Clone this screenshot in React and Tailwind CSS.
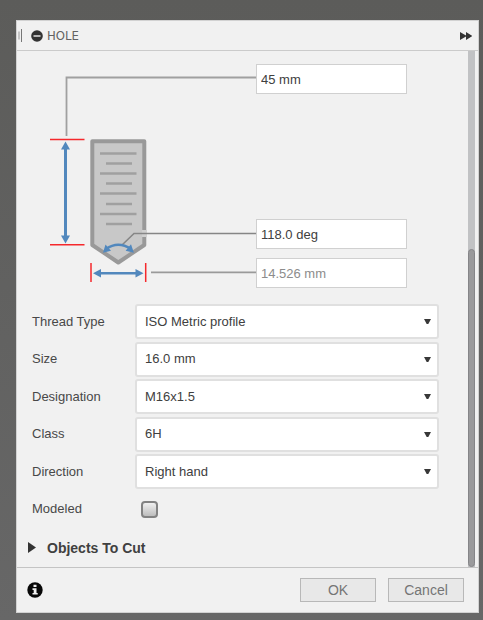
import React from 'react';

const inputClass =
  "h-[30px] w-[151px] border border-[#d0d0d0] bg-white px-1 text-[13px] leading-4 text-[#404040] shadow-none outline-none disabled:text-[#8c8c8c]";

function HoleDiagram() {
  return (
    <svg
      className="h-[252px] w-[239px] shrink-0"
      viewBox="17 51 239 252"
      fill="none"
      aria-hidden="true"
    >
      <path d="M92.300 141.300H144.300V245L118.300 262.500L92.300 245Z" fill="#c8c8c8" stroke="#999" strokeWidth="4" strokeLinejoin="round" />
      <path d="M142 230H147V237H142Z" fill="#d0d0d0" />
      <path
        d="M100 153.500H136.500M100 173.500H136.500M100 193.500H136.500M100 214H136.500M106 163.500H132M106 183.500H132M106 204H132M106 224H132"
        stroke="#a0a0a0"
        strokeWidth="2.300"
      />
      <path d="M66.500 136V77.500H256" stroke="#a0a0a0" strokeWidth="1.800" />
      <path d="M256 233.500H134L122 245" stroke="#868686" strokeWidth="1.600" />
      <path d="M151 272.300H256" stroke="#9a9a9a" strokeWidth="1.800" />
      <path d="M50 139.500H84.500M50 244.700H84.500M91 263V282M145.700 263V282" stroke="#f5282c" strokeWidth="1.500" />
      <g stroke="#5288bd" strokeWidth="2.600">
        <path d="M65.500 147V238" strokeWidth="3" />
        <path d="M98 273.300H139" />
        <path d="M106 249Q118 240.500 131 249" />
      </g>
      <g fill="#5288bd">
        <path d="M65.500 141.500L70 149.500H61ZM65.500 243.500L70 235.500H61Z" />
        <path d="M93 273.300L101 269V277.600ZM143.500 273.300L135.500 269V277.600Z" />
        <path d="M103 252.700L105.500 244.500L111 250.800ZM133.900 252.700L131 244.300L125.600 250.800Z" />
      </g>
    </svg>
  );
}

function SelectRow({ id, label, value }) {
  return (
    <div className="flex items-center">
      <label htmlFor={id} className="w-[103px] shrink-0">
        {label}
      </label>
      <div className="relative flex-1">
        <select
          id={id}
          defaultValue={value}
          className="block h-[35px] w-full appearance-none rounded-[3px] border-2 border-[#e0e0e0] bg-white pl-2 pr-6 text-[13px] text-[#404040] outline-none"
        >
          <option>{value}</option>
        </select>
        <svg className="pointer-events-none absolute right-2 top-[15px] h-[5px] w-[7px]" viewBox="0 0 7 5" aria-hidden="true">
          <path d="M0 0H7L4.300 5H2.700Z" fill="#383838" />
        </svg>
      </div>
    </div>
  );
}

const fields = [
  { id: 'thread-type', label: 'Thread Type', value: 'ISO Metric profile' },
  { id: 'size', label: 'Size', value: '16.0 mm' },
  { id: 'designation', label: 'Designation', value: 'M16x1.5' },
  { id: 'class', label: 'Class', value: '6H' },
  { id: 'direction', label: 'Direction', value: 'Right hand' },
];

export default function App() {
  return (
    <main className="min-h-screen bg-linear-to-b from-[#5c5c5a] to-[#676767] pt-5 pr-1 pb-[7px] pl-4 font-['Liberation_Sans',Arial,sans-serif] text-[13px] leading-4 text-[#484848]">
      <section className="flex flex-col border border-[#d2d2d2] bg-[#f1f1f1]">
        <header className="flex h-[30px] items-center border-b border-[#cbcbcb] pr-[6px] pl-px">
          <svg className="h-[13px] w-[5px]" viewBox="0 0 5 13" aria-hidden="true">
            <path d="M1 2.500V10.500" stroke="#b5b5b5" strokeWidth="1.500" />
            <path d="M3.500 0V13" stroke="#777" strokeWidth="1" />
          </svg>
          <button type="button" aria-label="Minimize" className="ml-2">
            <svg className="size-3" viewBox="0 0 12 12">
              <circle cx="6" cy="6" r="5.800" fill="#333" />
              <path d="M2.500 6H9.500" stroke="#f1f1f1" strokeWidth="1.400" />
            </svg>
          </button>
          <h1 className="ml-1 font-['DejaVu_Sans_Condensed','Noto_Sans',sans-serif] text-[13px] text-[#626262]">HOLE</h1>
          <button type="button" aria-label="Expand" className="ml-auto">
            <svg className="h-2 w-3" viewBox="0 0 12 8">
              <path d="M0 0L6 3.500V0L12.500 4L6 8V4.500L0 8Z" fill="#333" />
            </svg>
          </button>
        </header>

        <div className="flex pr-[3px]">
          <div className="min-w-0 flex-1">
            <div className="flex">
              <HoleDiagram />
              <div className="flex flex-col pt-[13px]">
                <input aria-label="Hole depth" defaultValue="45 mm" className={inputClass} />
                <input aria-label="Drill point angle" defaultValue="118.0 deg" className={inputClass + " mt-[125px]"} />
                <input aria-label="Hole diameter" defaultValue="14.526 mm" disabled className={inputClass + " mt-[9px]"} />
              </div>
            </div>

            <div className="grid h-[225px] grid-rows-6 pr-[29px] pl-[15px]">
              {fields.map((f) => (
                <SelectRow key={f.id} {...f} />
              ))}
              <div className="flex items-center">
                <label htmlFor="modeled" className="w-[109px]">
                  Modeled
                </label>
                <input
                  id="modeled"
                  type="checkbox"
                  className="size-[17px] appearance-none rounded-[4px] border-2 border-[#828282] bg-linear-to-b from-[#f0f0f0] to-[#bdbdbd]"
                />
              </div>
            </div>

            <button type="button" aria-expanded="false" className="flex h-[39px] items-center gap-[11px] pl-[11px] text-sm font-bold text-[#404040]">
              <svg className="h-[11px] w-2" viewBox="0 0 8 11" aria-hidden="true">
                <path d="M0 0L8 5.500L0 11Z" fill="#333" />
              </svg>
              Objects To Cut
            </button>
          </div>

          <div className="flex w-[7px] flex-col justify-end bg-[#c1c2c4]">
            <div className="h-[318px] rounded-[4px] border border-[#858588] bg-[#9a9a9c]" />
          </div>
        </div>

        <footer className="flex h-[45px] items-center border-t border-[#c4c4c4] pr-[14px] pl-[10px]">
          <button type="button" aria-label="Information">
            <svg className="size-4" viewBox="0 0 16 16">
              <circle cx="8" cy="8" r="7.700" fill="#080808" />
              <path d="M6.500 2.800H9.500V5H6.500ZM5.500 6.300H9.500V11H10.700V12.600H5.500V11H6.700V7.900H5.500Z" fill="#f1f1f1" />
            </svg>
          </button>
          <div className="ml-auto flex gap-3">
            <button type="button" className="h-6 w-[76px] border border-[#b8b8b8] bg-[#e8e8e8] text-sm text-[#757575]">
              OK
            </button>
            <button type="button" className="h-6 w-[76px] border border-[#b8b8b8] bg-[#e8e8e8] text-sm text-[#757575]">
              Cancel
            </button>
          </div>
        </footer>
      </section>
    </main>
  );
}
